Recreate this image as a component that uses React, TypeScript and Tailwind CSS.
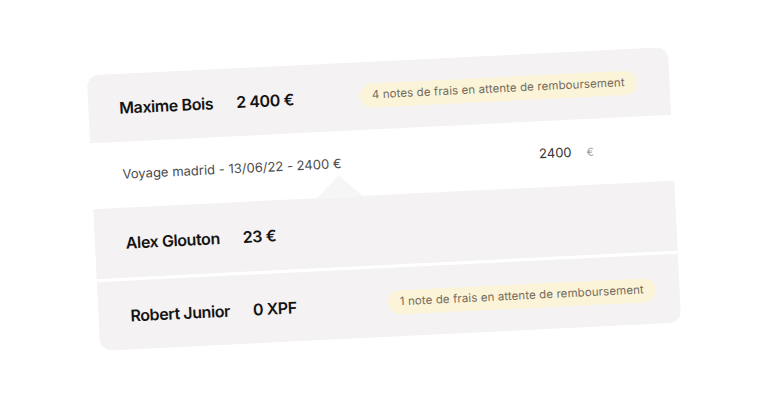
import React from "react";

function Badge({ text, className }: { text: string; className: string }) {
  return (
    <div
      className={
        "ml-auto h-[24px] flex items-center rounded-full bg-[#fcf4d8] px-[12px] text-[11.5px] text-[#746c5e] tracking-[0.1px] whitespace-nowrap " +
        className
      }
    >
      {text}
    </div>
  );
}

export default function App() {
  return (
    <div
      className="w-[767px] h-[400px] bg-white flex items-center justify-center overflow-hidden"
      style={{ fontFamily: "Inter, 'Noto Sans', sans-serif" }}
    >
      <div className="w-[582px] -translate-y-[1px] rotate-[-2.8deg] rounded-[12px] overflow-hidden bg-white flex flex-col">
        {/* Row 1 */}
        <div className="h-[68px] bg-[#f4f2f2] flex items-center pl-[31px]">
          <span className="text-[16px] font-semibold text-[#141414] tracking-[-0.4px]">
            Maxime Bois
          </span>
          <span className="ml-[23px] text-[16px] font-semibold text-[#141414] tracking-[-0.4px]">
            2 400 €
          </span>
          <Badge text="4 notes de frais en attente de remboursement" className="mr-[33px]" />
        </div>

        {/* Expanded detail */}
        <div className="relative h-[66px] flex items-center pl-[31px] pr-[79px]">
          <span className="text-[13px] text-[#4b4b4b] tracking-[0.02px]">
            Voyage madrid - 13/06/22 - 2400 €
          </span>
          <span className="ml-auto text-[13px] text-[#333333]">2400</span>
          <span className="ml-[15px] text-[11px] text-[#9a9a9a]">€</span>
          <div className="absolute bottom-0 left-[224px] w-0 h-0 border-l-[23px] border-r-[23px] border-b-[22px] border-l-transparent border-r-transparent border-b-[#f7f6f6]" />
        </div>

        {/* Row 2 */}
        <div className="h-[70px] bg-[#f4f2f2] flex items-center pl-[31px]">
          <span className="text-[16px] font-semibold text-[#141414] tracking-[-0.4px]">
            Alex Glouton
          </span>
          <span className="ml-[23px] text-[16px] font-semibold text-[#141414] tracking-[-0.4px]">
            23 €
          </span>
        </div>

        <div className="h-[3px] bg-white" />

        {/* Row 3 */}
        <div className="h-[69px] bg-[#f4f2f2] flex items-center pl-[32px]">
          <span className="text-[16px] font-semibold text-[#141414] tracking-[-0.4px]">
            Robert Junior
          </span>
          <span className="ml-[23px] text-[16px] font-semibold text-[#141414] tracking-[-0.4px]">
            0 XPF
          </span>
          <Badge text="1 note de frais en attente de remboursement" className="mr-[24px]" />
        </div>
      </div>
    </div>
  );
}
